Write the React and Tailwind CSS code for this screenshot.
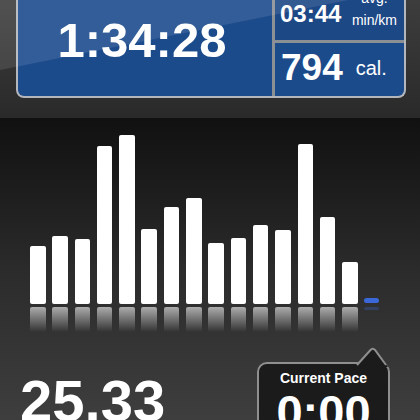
import React from "react";

const BARS = [58, 68, 65, 158, 169, 75, 97, 106, 61, 66, 79, 74, 160, 87, 42];

const FONT = "font-['Liberation_Sans',Arial,sans-serif]";

const StatsPanel = () => (
  <div className="relative h-[118px] bg-gradient-to-b from-[#3d3d3d] to-[#2a2a2a] pl-[16px]">
    <div className="flex h-[98px] w-[390px] rounded-b-[8px] border-x-2 border-b-2 border-[#b3b7bb] bg-[#1c4b8c]">
      {/* elapsed time */}
      <div className="flex w-[254px] items-start justify-center pr-[6px]">
        <span className="mt-[16px] text-[49px] font-bold leading-none text-white">1:34:28</span>
      </div>
      <div className="w-[3px] bg-[#8b9094]" />
      <div className="flex flex-1 flex-col">
        <div className="flex h-[40px] items-start justify-between bg-[#1d4886] pl-[5px] pr-[7px]">
          <span className="mt-[2px] text-[24px] font-bold leading-none text-white">03:44</span>
          <div className="-mt-[13px] flex flex-col items-center text-[14px] leading-[22px] text-white">
            <span>avg.</span>
            <span>min/km</span>
          </div>
        </div>
        <div className="h-[3px] bg-[#8b9094]" />
        <div className="flex flex-1 items-start pl-[6px]">
          <span className="mt-[6px] text-[37px] font-bold leading-none text-white">794</span>
          <span className="ml-[13px] mt-[15px] text-[20px] leading-none text-white">cal.</span>
        </div>
      </div>
    </div>
    {/* glossy highlight */}
    <div className="pointer-events-none absolute inset-0 bg-white/10 [clip-path:polygon(0_0,348px_0,0_70px)]" />
  </div>
);

const PaceChart = () => (
  <div className="pl-[30px]">
    <div className="flex h-[186px] items-end gap-[6.8px]">
      {BARS.map((h, i) => (
        <div key={i} className="w-[15.5px] rounded-[2px] bg-white" style={{ height: h }} />
      ))}
      <div className="mb-[1px] h-[5px] w-[15px] rounded-full bg-[#3a68d8]" />
    </div>
    <div className="mt-[3px] flex h-[25px] items-start gap-[6.8px]">
      {BARS.map((_, i) => (
        <div key={i} className="h-full w-[15.5px] rounded-t-[2px] bg-gradient-to-b from-white/60 to-white/0" />
      ))}
      <div className="h-[3px] w-[15px] rounded-full bg-[#3a68d8]/30" />
    </div>
  </div>
);

const CurrentPace = () => (
  <div className="relative mt-[30px] w-[133px] self-start rounded-[10px] border-2 border-[#8f8f8f] bg-[#1b1b1b] pt-[7px] pb-4 text-center text-white">
    <svg className="absolute left-[94px] top-[-18px]" width="44" height="24" viewBox="0 0 44 24">
      <path d="M2 21 L17.5 4 Q19.7 1.5 22 4 L35 21 Z" fill="#1b1b1b" />
      <path d="M4 19 L17.5 4 Q19.7 1.5 22 4 L33 19" fill="none" stroke="#8f8f8f" strokeWidth="2" />
    </svg>
    <div className="text-[14px] font-bold leading-none">Current Pace</div>
    <div className="mt-[3px] text-[47px] font-bold leading-none">0:00</div>
  </div>
);

export default function App() {
  return (
    <div className={`h-[420px] w-[420px] overflow-hidden ${FONT}`}>
      <StatsPanel />
      <div className="h-[302px] bg-gradient-to-b from-[#111111] via-[#2b2b2b] to-[#3e3e3e]">
        <PaceChart />
        <div className="flex justify-between pl-[20px] pr-[30px]">
          <span className="mt-[40px] text-[58px] font-bold leading-none text-white">25.33</span>
          <CurrentPace />
        </div>
      </div>
    </div>
  );
}
